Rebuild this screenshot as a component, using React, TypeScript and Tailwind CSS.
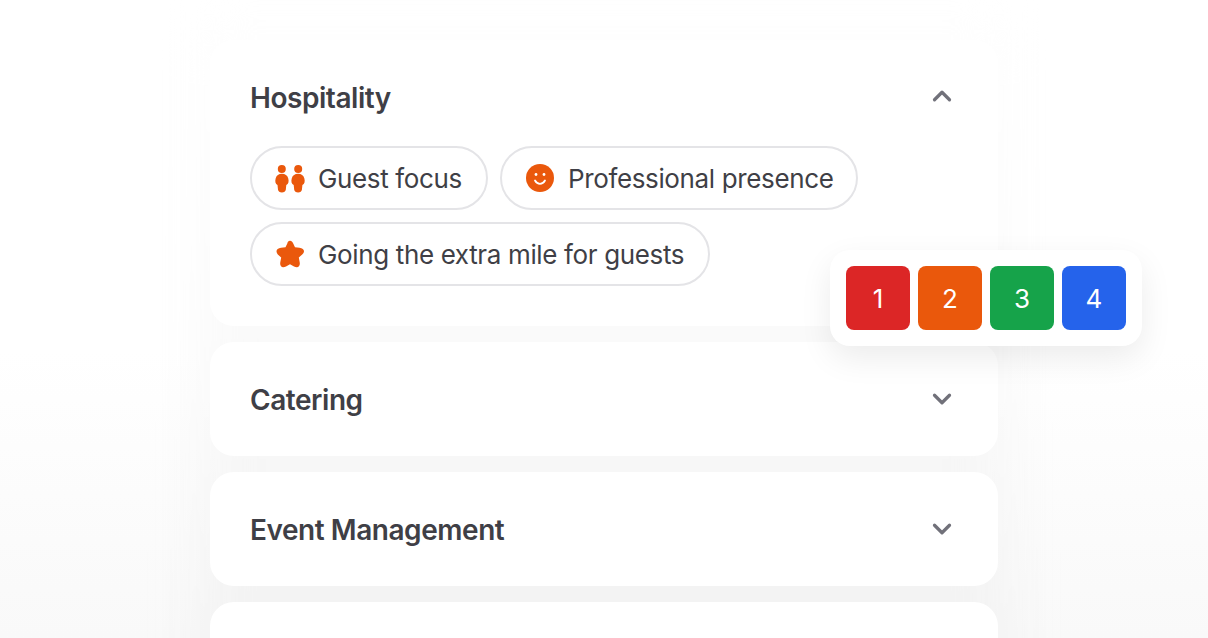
import { ChevronDown, ChevronUp } from "lucide-react";

const font = { fontFamily: "Inter, sans-serif" };

function Guests() {
  return (
    <svg width="28" height="28" viewBox="0 0 28 28" fill="#ea580c" className="overflow-visible">
      <circle cx="5.800" cy="5" r="4" />
      <circle cx="22.200" cy="5" r="4" />
      <path d="M5.900 9.800c3.200 0 5.500 1.700 6.300 4.400.9 3 .3 5.900-1.900 6.900l-.5 4.700c-.2 1.600-1.800 2.700-3.900 2.700s-3.700-1.100-3.900-2.700l-.5-4.700C-.6 20.100-1.200 17.200-.3 14.200.500 11.500 2.700 9.800 5.900 9.800z" />
      <path d="M22.100 9.800c3.200 0 5.400 1.700 6.200 4.400.9 3 .3 5.900-1.900 6.900l-.5 4.700c-.2 1.600-1.700 2.700-3.800 2.700s-3.700-1.100-3.900-2.700l-.5-4.700c-2.200-1-2.800-3.900-1.900-6.900.8-2.700 3.100-4.400 6.300-4.400z" />
    </svg>
  );
}

function Smile() {
  return (
    <svg width="28" height="28" viewBox="0 0 28 28">
      <circle cx="14" cy="14" r="14" fill="#ea580c" />
      <circle cx="10" cy="10.500" r="1.400" fill="#fff" />
      <circle cx="18" cy="10.500" r="1.400" fill="#fff" />
      <path d="M9 16.500c1.300 2.300 3 3.300 5 3.300s3.700-1 5-3.300" fill="none" stroke="#fff" strokeWidth="1.800" strokeLinecap="round" />
    </svg>
  );
}

function Star() {
  return (
    <svg width="28" height="28" viewBox="0 0 28 28" fill="#ea580c">
      <path d="M14 .8c1.500 0 2.400.9 3.100 2.400l1.900 4 4.500.6c2.800.4 4.500 1.500 4.500 3.500 0 1.200-.7 2.200-1.800 3.200l-3.400 3.100.9 4.600c.5 2.800-.5 5-2.900 5-.9 0-1.800-.3-2.800-.8l-4-2.200-4 2.200c-1 .5-1.900.8-2.800.8-2.400 0-3.400-2.200-2.900-5l.9-4.600-3.400-3.100C1.200 13.500.5 12.500.5 11.300c0-2 1.700-3.100 4.500-3.500l4.500-.6 1.900-4C11.600 1.700 12.500.8 14 .8z" />
    </svg>
  );
}

function Chip({ icon, label, tight }: { icon: React.ReactNode; label: string; tight?: boolean }) {
  return (
    <div className={`flex h-16 items-center gap-[14px] rounded-full border-2 border-[#e4e4e7] pl-6 ${tight ? "pr-[22px]" : "pr-6"}`}>
      {icon}
      <span className="pt-0.5 text-[26px] leading-[34px] tracking-[-0.36px] text-[#3f3f46]">{label}</span>
    </div>
  );
}

function Card({ title, open, children }: { title: string; open?: boolean; children?: React.ReactNode }) {
  return (
    <section className="relative w-[788px] shrink-0 rounded-3xl bg-white px-10 pt-[41px] pb-[39px]">
      <div className="flex items-center justify-between">
        <h2 className="text-[28px] font-semibold leading-[34px] tracking-[-0.45px] text-[#3f3f46]">{title}</h2>
        {open ? (
          <ChevronUp size={30} strokeWidth={2.6} className="mr-px -translate-y-0.5 text-[#71717a]" />
        ) : (
          <ChevronDown size={30} strokeWidth={2.6} className="mr-px -translate-y-px text-[#71717a]" />
        )}
      </div>
      {children}
    </section>
  );
}

const swatches = [
  { n: "1", c: "bg-[#dc2626]" },
  { n: "2", c: "bg-[#ea580c]" },
  { n: "3", c: "bg-[#16a34a]" },
  { n: "4", c: "bg-[#2563eb]" },
];

export default function App() {
  return (
    <div style={font} className="relative flex h-[638px] w-[1208px] flex-col items-center gap-4 overflow-hidden bg-gradient-to-b from-white from-55% to-[#f9f9f9] pt-10">
      <div className="absolute left-[200px] top-[30px] h-[680px] w-[808px] bg-gradient-to-b from-[#fefefe] via-[#fafafa] via-45% to-[#f0f0f0] blur-[24px]" />
      <Card title="Hospitality" open>
        <div className="mt-[31px] mb-px flex flex-wrap gap-3">
          <Chip icon={<Guests />} label="Guest focus" />
          <Chip icon={<Smile />} label="Professional presence" tight />
          <Chip icon={<Star />} label="Going the extra mile for guests" />
        </div>
      </Card>
      <Card title="Catering" />
      <Card title="Event Management" />
      <section className="relative h-[114px] w-[788px] shrink-0 rounded-3xl bg-white" />
      <div className="absolute left-[830px] top-[250px] flex gap-2 rounded-[20px] bg-white p-4 shadow-[0_12px_32px_rgba(0,0,0,0.08)]">
        {swatches.map((s) => (
          <div key={s.n} className={`flex h-16 w-16 items-center justify-center rounded-lg text-[26px] text-white ${s.c}`}>
            {s.n}
          </div>
        ))}
      </div>
    </div>
  );
}
